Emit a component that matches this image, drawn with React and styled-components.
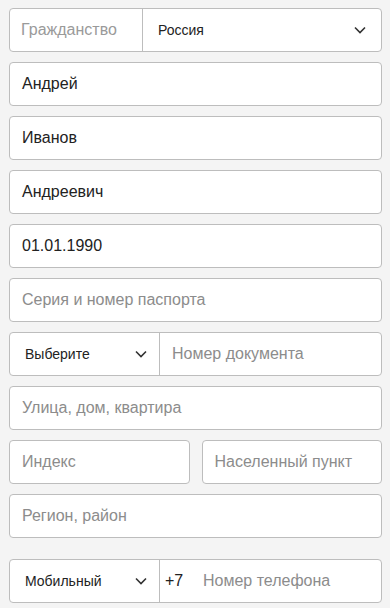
import React from 'react';
import styled, { createGlobalStyle } from 'styled-components';

const GlobalStyle = createGlobalStyle`
  body {
    margin: 0;
    background: #f4f4f4;
    font-family: "Liberation Sans", Arial, sans-serif;
  }
`;

const Form = styled.div`
  display: flex;
  flex-direction: column;
  gap: 10px;
  padding: 8px 8px 0 9px;
`;

const Field = styled.div`
  flex: none;
  display: flex;
  align-items: stretch;
  height: 44px;
  box-sizing: border-box;
  background: #fff;
  border: 1px solid #bdbdbd;
  border-radius: 4px;
  overflow: hidden;
  margin-top: ${(p) => (p.$spaced ? '11px' : '0')};
`;

const Row = styled.div`
  display: flex;
  gap: 12px;

  & > ${Field} {
    flex: 1 1 0;
    min-width: 0;
  }
`;

const Text = styled.div`
  flex: 1;
  display: flex;
  align-items: center;
  padding: 0 ${(p) => p.$pad ?? 12}px;
  font-size: 16px;
  color: ${(p) => (p.$placeholder ? '#8c8c8c' : '#222')};
  white-space: nowrap;
`;

const Label = styled.div`
  display: flex;
  align-items: center;
  width: 133px;
  padding-left: 11px;
  box-sizing: border-box;
  font-size: 16px;
  color: #9a9a9a;
  border-right: 1px solid #bdbdbd;
`;

const Select = styled.div`
  display: flex;
  align-items: center;
  justify-content: space-between;
  box-sizing: border-box;
  ${(p) => (p.$width ? `width: ${p.$width}px; flex: none;` : 'flex: 1;')}
  padding: 0 ${(p) => p.$right}px 0 ${(p) => p.$left}px;
  font-size: 14px;
  color: #222;
  ${(p) => p.$divider && 'border-right: 1px solid #bdbdbd;'}
`;

const Prefix = styled.div`
  display: flex;
  align-items: center;
  padding-left: 5px;
  width: 38px;
  font-size: 16px;
  color: #222;
`;

const Chevron = () => (
  <svg width="12" height="8" viewBox="0 0 12 8" fill="none">
    <path d="M1 1.5 L6 6.5 L11 1.5" stroke="#333" strokeWidth="1.6" />
  </svg>
);

export default function App() {
  return (
    <>
      <GlobalStyle />
      <Form>
        <Field>
          <Label>Гражданство</Label>
          <Select $left={15} $right={15}>
            Россия
            <Chevron />
          </Select>
        </Field>
        <Field><Text>Андрей</Text></Field>
        <Field><Text>Иванов</Text></Field>
        <Field><Text>Андреевич</Text></Field>
        <Field><Text>01.01.1990</Text></Field>
        <Field><Text $placeholder>Серия и номер паспорта</Text></Field>
        <Field>
          <Select $width={150} $left={15} $right={12} $divider>
            Выберите
            <Chevron />
          </Select>
          <Text $placeholder>Номер документа</Text>
        </Field>
        <Field><Text $placeholder>Улица, дом, квартира</Text></Field>
        <Row>
          <Field><Text $placeholder>Индекс</Text></Field>
          <Field><Text $placeholder>Населенный пункт</Text></Field>
        </Row>
        <Field><Text $placeholder>Регион, район</Text></Field>
        <Field $spaced>
          <Select $width={150} $left={15} $right={12} $divider>
            Мобильный
            <Chevron />
          </Select>
          <Prefix>+7</Prefix>
          <Text $placeholder $pad={0}>Номер телефона</Text>
        </Field>
      </Form>
    </>
  );
}
